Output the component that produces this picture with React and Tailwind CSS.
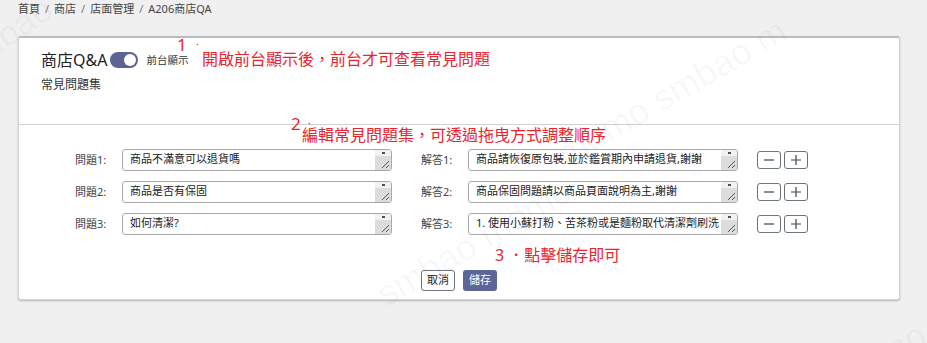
import React from "react";

const questions = [
  { q: "商品不滿意可以退貨嗎", q2: "商品可以退款嗎", a: "商品請恢復原包裝,並於鑑賞期內申請退貨,謝謝", a2: "" },
  { q: "商品是否有保固", q2: "", a: "商品保固問題請以商品頁面說明為主,謝謝", a2: "" },
  { q: "如何清潔?", q2: "", a: "1. 使用小蘇打粉、苦茶粉或是麵粉取代清潔劑刷洗", a2: "2. 清洗後請放置通風處晾乾，避免陽光直射曝曬" },
];

function FakeTextarea({ line1, line2 }) {
  return (
    <div className="w-[270px] h-[22px] border border-[#a9a9a9] rounded-[3px] bg-white flex overflow-hidden">
      <div className="flex-1 pl-[7px] text-[11px] leading-[18px] text-[#222] overflow-hidden whitespace-nowrap">
        <div>{line1}</div>
        <div>{line2}</div>
      </div>
      <div className="w-[16px] h-full bg-[#dcdcdc] flex flex-col relative">
        <div className="h-[6px] bg-[#f1f1f1] flex items-center justify-center">
          <div className="w-[3px] h-[2px] bg-[#505050]"></div>
        </div>
        <svg className="absolute right-[1px] bottom-[1px]" width="9" height="9" viewBox="0 0 9 9">
          <path d="M8 1 L1 8 M8 5 L5 8" stroke="#555" strokeWidth="1" />
        </svg>
      </div>
    </div>
  );
}

function SmallBtn({ children }) {
  return (
    <div className="w-[24px] h-[18px] border border-[#6c757d] rounded-[3px] bg-white flex items-center justify-center text-[#444]">
      {children}
    </div>
  );
}

export default function App() {
  return (
    <div
      className="w-[927px] h-[343px] bg-[#f0f0f0] relative overflow-hidden"
      style={{ fontFamily: '"Noto Sans", "Noto Sans CJK TC", sans-serif' }}>
      {/* breadcrumb */}
      <div className="h-[18px] pl-[18px] pt-[1px] text-[11px] leading-[16px] text-[#444] flex gap-[5px]">
        <span>首頁</span>
        <span className="text-[#777]">/</span>
        <span>商店</span>
        <span className="text-[#777]">/</span>
        <span>店面管理</span>
        <span className="text-[#777]">/</span>
        <span>A206商店QA</span>
      </div>

      {/* card */}
      <div className="ml-[18px] mt-[18px] w-[882px] h-[264px] bg-white border border-[#d4d4d4] border-t-2 border-t-[#b9bcc0] rounded-[3px] shadow-[0_1px_2px_rgba(0,0,0,0.25)] flex flex-col">
        <div className="h-[87px] border-b border-[#cfcfcf] pl-[22px] pt-[12px]">
          <div className="flex items-center h-[20px]">
            <span className="text-[16px] leading-[20px] text-[#222]">商店Q&amp;A</span>
            <div className="ml-[3px] w-[28px] h-[16px] rounded-full bg-[#5c6494] flex items-center justify-end pr-[2px]">
              <div className="w-[12px] h-[12px] rounded-full bg-white"></div>
            </div>
            <span className="ml-[8px] text-[10.5px] leading-[14px] text-[#333]">前台顯示</span>
          </div>
          <div className="mt-[7px] text-[12px] leading-[16px] text-[#333]">常見問題集</div>
        </div>

        <div className="flex-1 flex flex-col pt-[24px]">
          <div className="flex flex-col gap-[10px]">
            {questions.map((item, i) => (
              <div key={i} className="flex items-center h-[22px] pl-[56px]">
                <span className="w-[47px] text-[11px] text-[#444]">問題{i + 1}:</span>
                <FakeTextarea line1={item.q} line2={item.q2} />
                <span className="ml-[29px] w-[47px] text-[11px] text-[#444]">解答{i + 1}:</span>
                <FakeTextarea line1={item.a} line2={item.a2} />
                <div className="ml-[19px] flex gap-[3px]">
                  <SmallBtn>
                    <svg width="12" height="12" viewBox="0 0 12 12">
                      <path d="M1 6 H11" stroke="#444" strokeWidth="1.2" />
                    </svg>
                  </SmallBtn>
                  <SmallBtn>
                    <svg width="12" height="12" viewBox="0 0 12 12">
                      <path d="M1 6 H11 M6 1 V11" stroke="#444" strokeWidth="1.2" />
                    </svg>
                  </SmallBtn>
                </div>
              </div>
            ))}
          </div>
          <div className="mt-[35px] flex justify-center gap-[8px]">
            <button className="w-[34px] h-[21px] border border-[#6c757d] rounded-[3px] bg-white text-[11px] text-[#222] flex items-center justify-center">取消</button>
            <button className="w-[34px] h-[21px] rounded-[3px] bg-[#5f6497] text-[11px] text-white flex items-center justify-center">儲存</button>
          </div>
        </div>
      </div>

      {/* annotations */}
      <span className="absolute left-[177px] top-[35px] text-[17px] leading-[20px] text-[#e8262f]">1</span>
      <span className="absolute left-[196px] top-[38px] text-[10px] leading-[12px] text-[#e8262f]">·</span>
      <span className="absolute left-[202px] top-[49px] text-[16px] leading-[20px] text-[#e8262f]">開啟前台顯示後，前台才可查看常見問題</span>
      <span className="absolute left-[291px] top-[114px] text-[17px] leading-[20px] text-[#e8262f]">2</span>
      <span className="absolute left-[308px] top-[117px] text-[10px] leading-[12px] text-[#e8262f]">·</span>
      <span className="absolute left-[302px] top-[125px] text-[16px] leading-[20px] text-[#e8262f]">編輯常見問題集，可透過拖曳方式調整順序</span>
      <span className="absolute left-[495px] top-[245px] text-[16px] leading-[20px] text-[#e8262f]">3 ．點擊儲存即可</span>

      {/* watermark */}
      <div className="absolute inset-0 pointer-events-none text-[36px] text-black/[0.035] font-['Liberation_Sans',sans-serif]">
        <span className="absolute left-[-40px] top-[40px] -rotate-[35deg] origin-left whitespace-nowrap">smbao</span>
        <span className="absolute left-[560px] top-[130px] -rotate-[30deg] origin-left whitespace-nowrap">momo smbao m</span>
        <span className="absolute left-[380px] top-[270px] -rotate-[30deg] origin-left whitespace-nowrap">smbao momo</span>
        <span className="absolute left-[880px] top-[330px] -rotate-[30deg] origin-left whitespace-nowrap">mo</span>
      </div>
    </div>
  );
}
